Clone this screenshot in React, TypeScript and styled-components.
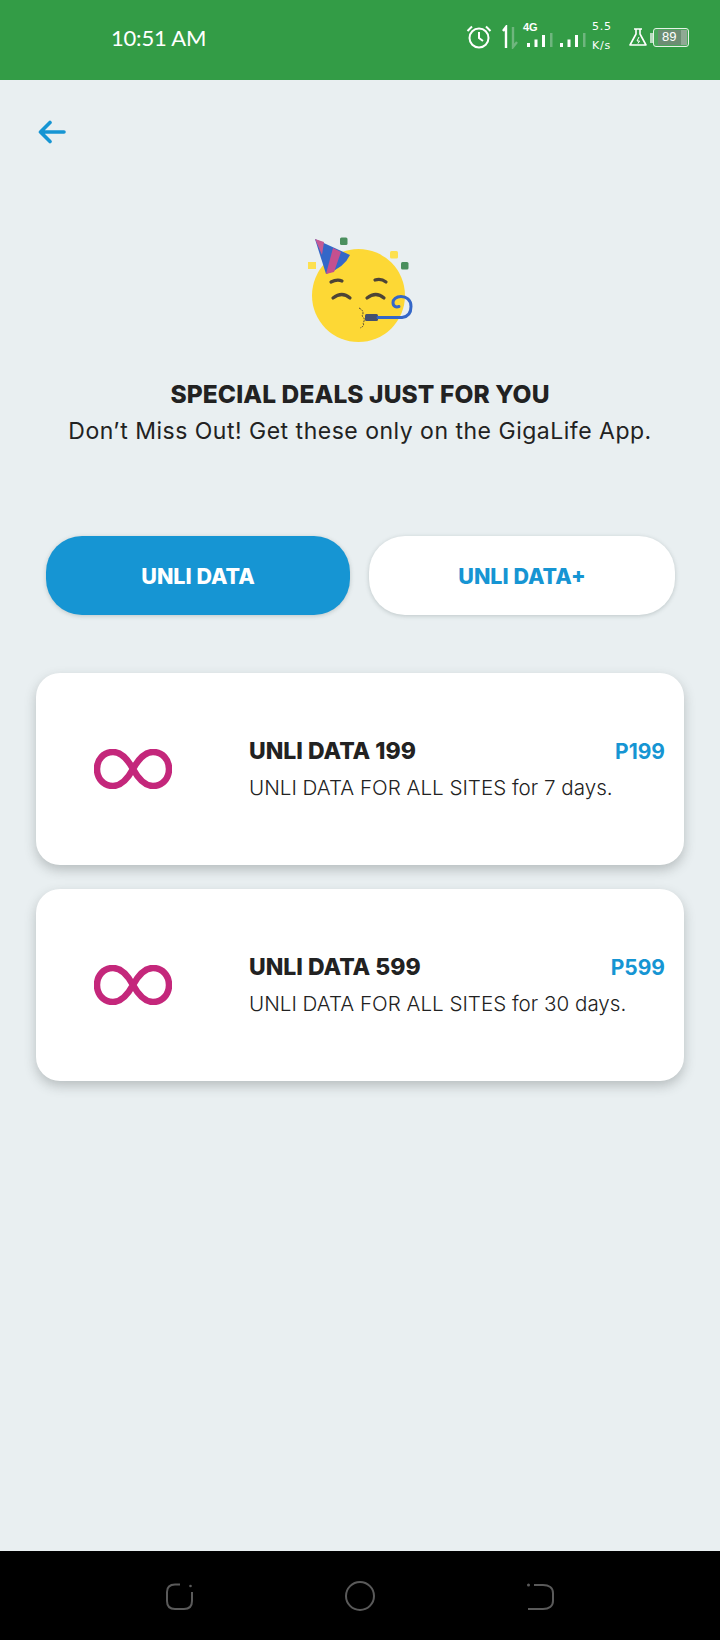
import React from 'react';
import styled, {createGlobalStyle} from 'styled-components';

const deals = [
  {name: 'UNLI DATA 199', price: 'P199', days: 7},
  {name: 'UNLI DATA 599', price: 'P599', days: 30},
];

const App = () => {
  return (
    <Page>
      <GlobalStyle />
      <StatusBar>
        <Clock>10:51 AM</Clock>
        <StatusIcons>
          <AlarmIcon />
          <ArrowsIcon />
          <Signal>
            <SignalLabel>4G</SignalLabel>
            <SignalIcon />
          </Signal>
          <SignalIcon second />
          <Speed>
            <span>5.5</span>
            <span>K/s</span>
          </Speed>
          <FlaskIcon />
          <BatteryTip />
          <Battery>
            <BatteryFill>89</BatteryFill>
          </Battery>
        </StatusIcons>
      </StatusBar>

      <Main>
        <BackButton aria-label="Back">
          <svg width="28" height="24" viewBox="0 0 28 24" fill="none" stroke="#1695d3" strokeWidth="3.6" strokeLinecap="round" strokeLinejoin="round">
            <path d="M26 12H3M12 2.5L2.5 12l9.5 9.5" />
          </svg>
        </BackButton>

        <Hero>
          <PartyFace />
          <Title>SPECIAL DEALS JUST FOR YOU</Title>
          <Subtitle>Don’t Miss Out! Get these only on the GigaLife App.</Subtitle>
        </Hero>

        <Tabs>
          <Tab active>UNLI DATA</Tab>
          <Tab>UNLI DATA+</Tab>
        </Tabs>

        <CardList>
          {deals.map(deal => (
            <Card key={deal.name}>
              <CardIcon>
                <svg width="78" height="40" viewBox="0 0 78 40" fill="none" stroke="#c4277b" strokeWidth="6.5">
                  <path d="M39 20C45 9 51 3 59 3c9.500 0 16 7.500 16 17s-6.500 17-16 17c-8 0-14-6-20-17C33 9 27 3 19 3 9.500 3 3 10.500 3 20s6.500 17 16 17c8 0 14-6 20-17z" />
                </svg>
              </CardIcon>
              <CardBody>
                <CardTop>
                  <CardName>{deal.name}</CardName>
                  <Price>{deal.price}</Price>
                </CardTop>
                <CardText>UNLI DATA FOR ALL SITES for {deal.days} days.</CardText>
              </CardBody>
            </Card>
          ))}
        </CardList>
      </Main>

      <NavBar>
        <svg width="30" height="30" viewBox="0 0 30 30" fill="none" stroke="#5a5a5a" strokeWidth="2">
          <path d="M15 3.500H10C5 3.500 2 6 2 11v9c0 5 3 8 8 8h9c5 0 8-3 8-8v-9" />
          <circle cx="25.500" cy="5" r="1.300" fill="#5a5a5a" stroke="none" />
        </svg>
        <svg width="30" height="30" viewBox="0 0 30 30" fill="none" stroke="#5a5a5a" strokeWidth="2">
          <circle cx="15" cy="15" r="14" />
        </svg>
        <svg width="30" height="30" viewBox="0 0 30 30" fill="none" stroke="#5a5a5a" strokeWidth="2">
          <path d="M9 4h9c6 0 10 3 10 8v8c0 5-4 8-10 8H3" />
          <circle cx="3.500" cy="4" r="1.500" fill="#5a5a5a" stroke="none" />
        </svg>
      </NavBar>
    </Page>
  );
};

export default App;

const AlarmIcon = () => (
  <AlarmSvg width="26" height="24" viewBox="0 0 26 24" fill="none" stroke="#fff" strokeWidth="2">
    <circle cx="13" cy="13" r="9.500" />
    <path d="M13 7v6l4 3M1.500 6L6 1.500M24.500 6L20 1.500" />
  </AlarmSvg>
);

const ArrowsIcon = () => (
  <ArrowSvg width="16" height="24" viewBox="0 0 16 24" fill="none" strokeWidth="2.400">
    <path d="M4 23V2L1 6" stroke="#fff" />
    <path d="M11 2v20l4-5" stroke="#6fb67e" />
  </ArrowSvg>
);

const SignalIcon = ({second}: {second?: boolean}) => (
  <SignalSvg second={second} width="29" height="15" viewBox="0 0 29 15">
    <rect x="3" y="10" width="3" height="4" fill="#fff" />
    <rect x="10.500" y="6.500" width="3" height="7.500" fill="#fff" />
    <rect x="18" y="2" width="3" height="12" fill="#fff" />
    <rect x="26" y="0" width="2.500" height="14" fill="#6fb67e" />
  </SignalSvg>
);

const FlaskIcon = () => (
  <FlaskSvg width="18" height="18" viewBox="0 0 18 18" fill="none" stroke="#fff" strokeWidth="1.600" strokeLinejoin="round">
    <path d="M5 1h8M7 1v5L1 17h16L11 6V1" />
    <path d="M10 9l-2 4h2.500L9 15.500" strokeWidth="1" />
  </FlaskSvg>
);

const PartyFace = () => (
  <FaceSvg width="140" height="130" viewBox="0 0 140 130">
    <circle cx="68.500" cy="75.500" r="46.500" fill="#fdd835" />
    <rect x="50" y="17.500" width="7.500" height="7.500" rx="1.500" fill="#4a8f5e" />
    <rect x="18" y="42" width="8" height="7" fill="#fde04f" />
    <rect x="100" y="31" width="8" height="7.500" rx="1.500" fill="#fde04f" />
    <rect x="111" y="42" width="7.500" height="7.500" rx="1.500" fill="#4a8f5e" />
    <path d="M25 19L60 35Q54 48 36 54z" fill="#3467c8" />
    <path d="M25 19l9 3-2 13z" fill="#c45a94" />
    <path d="M43 28l8 4-7 20-8 2z" fill="#c4508f" />
    <g fill="none" stroke="#4d4436" strokeWidth="3.200" strokeLinecap="round">
      <path d="M41 62q6-3 11-1M85 60q6-2 11 2" />
      <path d="M43 78q9-7 17 0M77 78q9-7 17 0" />
    </g>
    <path d="M69 88q6 3 3 8 4 3 1 7 2 3-3 5" fill="none" stroke="#4d4436" strokeWidth="1" strokeDasharray="2 1" />
    <rect x="75" y="94" width="13" height="7" rx="1.500" fill="#45506e" />
    <path d="M88 97.500h24q9-1 9-11c0-7-5-10-10-10-5 0-8 3-8 6 0 4 3 5 6 4" fill="none" stroke="#3467c8" strokeWidth="3" strokeLinecap="round" />
  </FaceSvg>
);

const GlobalStyle = createGlobalStyle`
  html, body {
    margin: 0;
    padding: 0;
    background: #e9eff1;
  }
  body {
    font-family: Inter, "Open Sans", sans-serif;
  }
`;

const Page = styled.div`
  width: 720px;
  height: 1640px;
  display: flex;
  flex-direction: column;
  overflow: hidden;
`;

const StatusBar = styled.header`
  height: 80px;
  flex: none;
  background: #339c46;
  display: flex;
  align-items: flex-start;
  justify-content: space-between;
  color: #fff;
`;

const Clock = styled.span`
  margin: 24px 0 0 111px;
  font-family: Lato, sans-serif;
  font-size: 22px;
  line-height: 28px;
  letter-spacing: -0.2px;
`;

const StatusIcons = styled.div`
  display: flex;
  align-items: flex-start;
  padding-right: 31px;
`;

const AlarmSvg = styled.svg`
  margin-top: 25px;
`;

const ArrowSvg = styled.svg`
  margin: 25px 6px 0 10px;
`;

const Signal = styled.div`
  position: relative;
`;

const SignalLabel = styled.span`
  position: absolute;
  left: -1px;
  top: 22px;
  font-family: "Liberation Sans", sans-serif;
  font-size: 11px;
  font-weight: 700;
  line-height: 11px;
`;

const SignalSvg = styled.svg<{second?: boolean}>`
  display: block;
  margin-top: 33px;
  margin-left: ${props => (props.second ? '4px' : '0')};
`;

const Speed = styled.div`
  margin: 21px 0 0 6px;
  width: 37px;
  display: flex;
  flex-direction: column;
  gap: 7px;
  font-family: "DejaVu Sans", sans-serif;
  font-size: 11px;
  line-height: 12px;
  letter-spacing: 0.8px;
`;

const FlaskSvg = styled.svg`
  margin-top: 28px;
`;

const BatteryTip = styled.span`
  width: 3px;
  height: 10px;
  margin: 33px 0 0 3px;
  background: #b9dcc0;
`;

const Battery = styled.div`
  width: 36px;
  height: 19px;
  margin: 28px 0 0 0;
  box-sizing: border-box;
  border: 1.500px solid #e4f2e6;
  border-radius: 3px;
  padding: 1px;
  background: #4aa75b;
`;

const BatteryFill = styled.div`
  width: 29px;
  height: 100%;
  margin-left: 3px;
  background: linear-gradient(90deg, #6c8d73 78%, #8fa994 78%);
  font-family: "Liberation Sans", sans-serif;
  font-size: 13px;
  line-height: 14px;
  padding-left: 4px;
  box-sizing: border-box;
`;

const Main = styled.main`
  flex: 1;
  display: flex;
  flex-direction: column;
  background: #e9eff1;
`;

const BackButton = styled.button`
  align-self: flex-start;
  margin: 40px 0 0 38px;
  padding: 0;
  border: 0;
  background: none;
  height: 24px;
`;

const Hero = styled.section`
  margin-top: 76px;
  display: flex;
  flex-direction: column;
  align-items: center;
`;

const FaceSvg = styled.svg`
  display: block;
`;

const Title = styled.h1`
  margin: 28px 0 0;
  font-size: 24.5px;
  line-height: 32px;
  font-weight: 800;
  letter-spacing: 0.1px;
  white-space: nowrap;
  color: #222;
`;

const Subtitle = styled.p`
  margin: 5px 0 0;
  font-size: 23px;
  line-height: 32px;
  font-weight: 400;
  letter-spacing: 0.5px;
  white-space: nowrap;
  color: #222;
`;

const Tabs = styled.div`
  margin: 89px 45px 0 46px;
  display: flex;
  gap: 19px;
`;

const Tab = styled.button<{active?: boolean}>`
  width: ${props => (props.active ? '304px' : '306px')};
  height: 79px;
  border: 0;
  border-radius: 36px;
  font-family: inherit;
  font-size: 21.5px;
  font-weight: 800;
  color: ${props => (props.active ? '#fff' : '#1695d3')};
  background: ${props => (props.active ? '#1695d3' : '#fff')};
  box-shadow: 0 1px 4px rgba(60, 80, 80, 0.25);
`;

const CardList = styled.div`
  margin: 58px 36px 0;
  display: flex;
  flex-direction: column;
  gap: 24px;
`;

const Card = styled.article`
  height: 192px;
  display: flex;
  align-items: center;
  padding: 0 19px 0 58px;
  background: #fff;
  border-radius: 24px;
  box-shadow: 0 5px 12px rgba(50, 60, 60, 0.27);
`;

const CardIcon = styled.div`
  width: 155px;
  flex: none;
  height: 40px;
`;

const CardBody = styled.div`
  flex: 1;
  display: flex;
  flex-direction: column;
  gap: 4px;
`;

const CardTop = styled.div`
  display: flex;
  justify-content: space-between;
  align-items: baseline;
`;

const CardName = styled.h2`
  margin: 0;
  font-size: 23px;
  line-height: 34px;
  font-weight: 800;
  color: #222;
`;

const Price = styled.span`
  font-size: 21px;
  font-weight: 700;
  color: #1695d3;
`;

const CardText = styled.p`
  margin: 0;
  font-size: 20.6px;
  line-height: 32px;
  font-weight: 300;
  color: #222;
`;

const NavBar = styled.nav`
  height: 89px;
  flex: none;
  background: #000;
  display: flex;
  align-items: center;
  justify-content: space-between;
  padding: 0 165px;
`;
